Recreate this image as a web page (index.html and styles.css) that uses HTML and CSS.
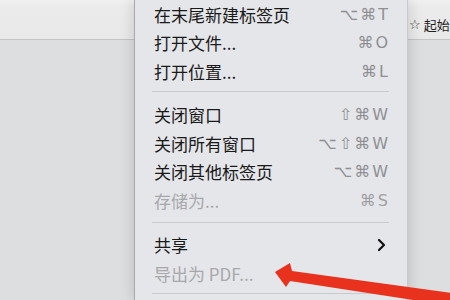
FILE: index.html
```html
<!DOCTYPE html>
<html lang="zh">
<head>
<meta charset="utf-8">
<link rel="stylesheet" href="styles.css">
</head>
<body>
<div class="window">
  <div class="toolbar">
    <span class="star">☆</span>
    <span class="start">起始</span>
  </div>
  <div class="content"></div>

  <div class="menu">
    <div class="row"><span class="label">在末尾新建标签页</span><span class="key">⌥⌘T</span></div>
    <div class="row"><span class="label">打开文件...</span><span class="key">⌘O</span></div>
    <div class="row"><span class="label">打开位置...</span><span class="key">⌘L</span></div>
    <div class="sep sep1"></div>
    <div class="row"><span class="label">关闭窗口</span><span class="key">⇧⌘W</span></div>
    <div class="row"><span class="label">关闭所有窗口</span><span class="key">⌥⇧⌘W</span></div>
    <div class="row"><span class="label">关闭其他标签页</span><span class="key">⌥⌘W</span></div>
    <div class="row disabled"><span class="label">存储为...</span><span class="key">⌘S</span></div>
    <div class="sep sep2"></div>
    <div class="row"><span class="label">共享</span>
      <svg class="chev" width="9" height="14" viewBox="0 0 9 14"><path d="M2 2 L7 7 L2 12" fill="none" stroke="#111" stroke-width="2.2" stroke-linecap="round" stroke-linejoin="round"/></svg>
    </div>
    <div class="row disabled"><span class="label">导出为 PDF...</span></div>
    <div class="sep sep3"></div>
  </div>

  <svg class="arrow" width="450" height="300" viewBox="0 0 450 300">
    <polygon points="275,272 290,263 292,271 452,293 452,306 290,281 286,287" fill="#e8321e"/>
  </svg>
</div>
</body>
</html>
```

FILE: styles.css
```css
html, body {
  margin: 0;
  padding: 0;
}
body {
  width: 450px;
  height: 300px;
  overflow: hidden;
  font-family: "Noto Sans CJK SC", "Noto Sans", sans-serif;
}
.window {
  position: relative;
  width: 450px;
  height: 300px;
  background: #dddee0;
  display: flex;
  flex-direction: column;
}
.toolbar {
  height: 39px;
  flex: none;
  background: linear-gradient(#f0f0f0, #ebebeb 20%, #e9e9e9);
  border-bottom: 1px solid #c4c4c4;
  display: flex;
  align-items: center;
  padding-left: 409px;
  white-space: nowrap;
  overflow: hidden;
  box-sizing: content-box;
}
.star {
  font-family: "DejaVu Sans", sans-serif;
  font-size: 13px;
  color: #333;
  margin-right: 3px;
  margin-top: 9px;
}
.start {
  font-size: 13px;
  color: #222;
  margin-top: 9px;
}
.content {
  flex: 1;
  background: #dddee0;
}
.menu {
  position: absolute;
  left: 134px;
  top: 0;
  width: 274px;
  height: 300px;
  background: #e5e6e9;
  border-left: 1px solid #a9a9ab;
  border-right: 1px solid #c9c9cb;
  box-shadow: 0 0 14px rgba(0, 0, 0, 0.16);
  padding: 0 19px 0 19px;
  box-sizing: border-box;
}
.row {
  height: 28.5px;
  display: flex;
  align-items: center;
  justify-content: space-between;
  font-size: 17px;
  color: #1a1a1a;
  white-space: nowrap;
}
.row.disabled {
  color: #a7a8ab;
}
.row.disabled .key {
  color: #a0a1a4;
}
.key {
  font-family: "DejaVu Sans", sans-serif;
  font-size: 16px;
  color: #8f9094;
  letter-spacing: 2px;
  margin-right: -2px;
}
.chev {
  margin-right: 2px;
}
.sep {
  height: 1px;
  background: #c9cacd;
  margin: 5px -1px 9px -2px;
}
.sep2 {
  margin-top: 7px;
  margin-bottom: 8px;
}
.arrow {
  position: absolute;
  left: 0;
  top: 0;
}
```
